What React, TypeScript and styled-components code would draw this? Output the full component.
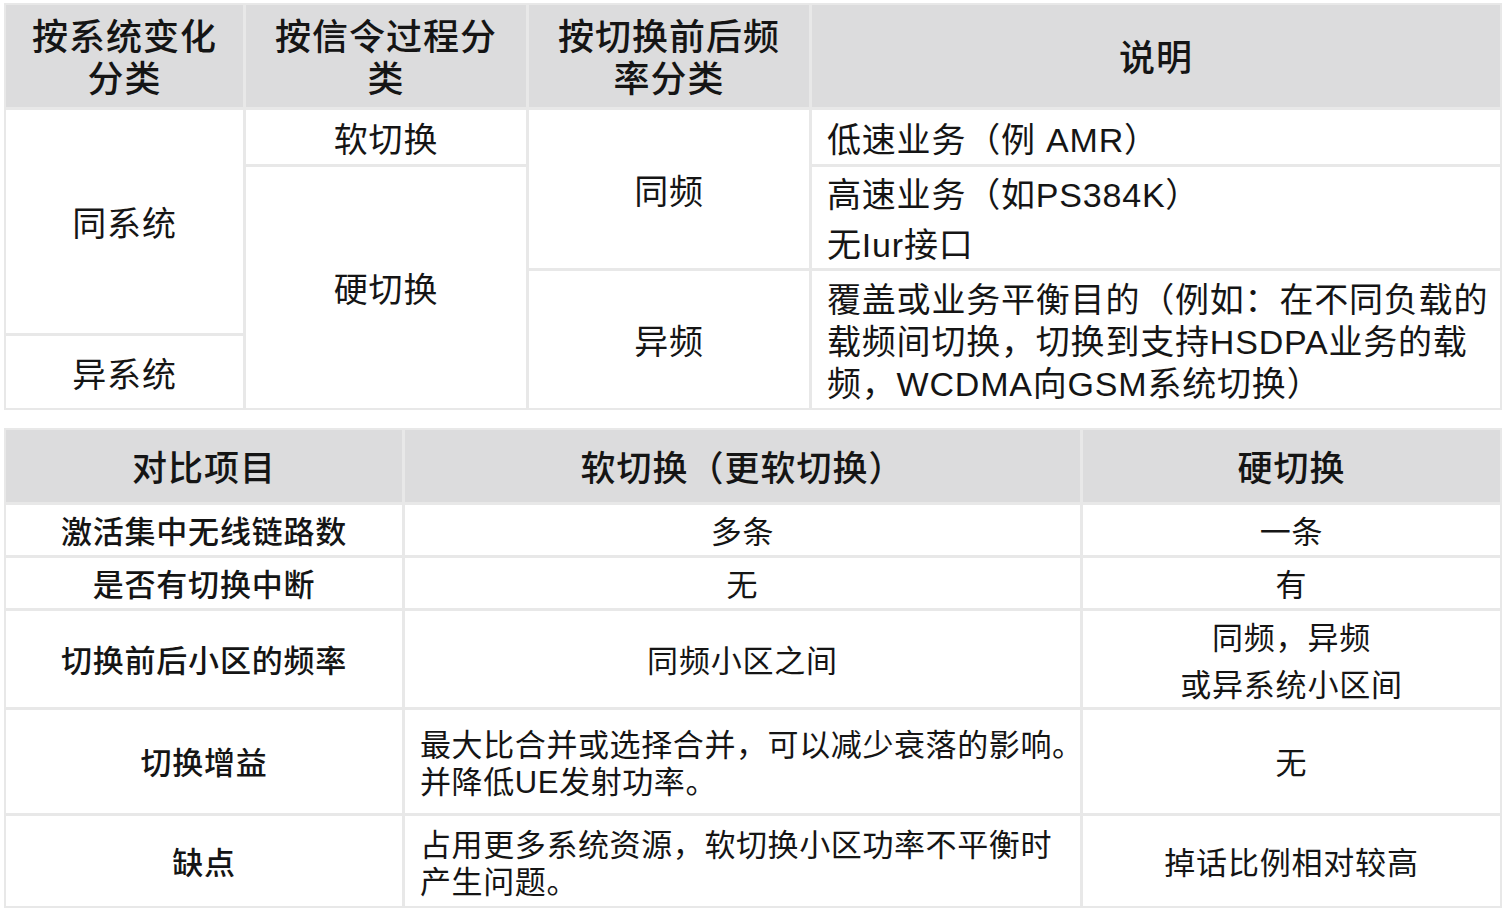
import React from 'react';
import styled, { createGlobalStyle } from 'styled-components';

const GlobalStyle = createGlobalStyle`
  html, body {
    margin: 0;
    padding: 0;
    background: #ffffff;
  }
  body {
    font-family: "Liberation Sans", "Noto Sans CJK SC", sans-serif;
    color: #151515;
  }
`;

const Page = styled.div`
  display: flex;
  flex-direction: column;
  gap: 18px;
  width: 1506px;
  padding: 3px 4px 0 4px;
  box-sizing: border-box;
`;

const Grid = styled.div<{ $cols: string; $rows: string }>`
  display: grid;
  grid-template-columns: ${(p) => p.$cols};
  grid-template-rows: ${(p) => p.$rows};
  gap: 3px;
  padding: 2px;
  background: #e8e8e8;
`;

type CellProps = {
  $col?: string;
  $row?: string;
  $head?: boolean;
  $left?: boolean;
  $size: number;
  $lh?: number;
  $weight?: number;
  $spacing?: number;
};

const Cell = styled.div<CellProps>`
  grid-column: ${(p) => p.$col || 'auto'};
  grid-row: ${(p) => p.$row || 'auto'};
  min-width: 0;
  background: ${(p) => (p.$head ? '#dcdcdd' : '#ffffff')};
  display: flex;
  flex-direction: column;
  justify-content: center;
  align-items: ${(p) => (p.$left ? 'flex-start' : 'center')};
  text-align: ${(p) => (p.$left ? 'left' : 'center')};
  padding: ${(p) => (p.$left ? '5px 0 0 15px' : '5px 8px 0 8px')};
  font-size: ${(p) => p.$size}px;
  line-height: ${(p) => p.$lh || 42}px;
  font-weight: ${(p) => p.$weight || 400};
  letter-spacing: ${(p) => p.$spacing ?? 0.8}px;
  white-space: nowrap;
`;

const Line = styled.span`
  display: block;
`;

const Lines: React.FC<{ text: string[] }> = ({ text }) => (
  <>
    {text.map((t) => (
      <Line key={t}>{t}</Line>
    ))}
  </>
);

const TOP = 34;
const BODY = 31;

const ClassifyTable = () => (
  <Grid $cols="237px 280px 280px 1fr" $rows="102px 54px 101px 62px 72px">
    <Cell $head $size={36} $weight={500} $spacing={1} $col="1" $row="1">
      <Lines text={['按系统变化', '分类']} />
    </Cell>
    <Cell $head $size={36} $weight={500} $spacing={1} $col="2" $row="1">
      <Lines text={['按信令过程分', '类']} />
    </Cell>
    <Cell $head $size={36} $weight={500} $spacing={1} $col="3" $row="1">
      <Lines text={['按切换前后频', '率分类']} />
    </Cell>
    <Cell $head $size={36} $weight={500} $spacing={1} $col="4" $row="1">
      说明
    </Cell>

    <Cell $size={TOP} $col="1" $row="2 / 5">同系统</Cell>
    <Cell $size={TOP} $col="1" $row="5">异系统</Cell>

    <Cell $size={TOP} $col="2" $row="2">软切换</Cell>
    <Cell $size={TOP} $col="2" $row="3 / 6">硬切换</Cell>

    <Cell $size={TOP} $col="3" $row="2 / 4">同频</Cell>
    <Cell $size={TOP} $col="3" $row="4 / 6">异频</Cell>

    <Cell $left $size={TOP} $col="4" $row="2">
      低速业务（例 AMR）
    </Cell>
    <Cell $left $size={TOP} $lh={50} $col="4" $row="3">
      <Lines text={['高速业务（如PS384K）', '无Iur接口']} />
    </Cell>
    <Cell $left $size={TOP} $col="4" $row="4 / 6">
      <Lines
        text={[
          '覆盖或业务平衡目的（例如：在不同负载的',
          '载频间切换，切换到支持HSDPA业务的载',
          '频，WCDMA向GSM系统切换）',
        ]}
      />
    </Cell>
  </Grid>
);

type Row = {
  item: string;
  soft: string[];
  hard: string[];
  softLeft?: boolean;
  softLh?: number;
  hardLh?: number;
};

const rows: Row[] = [
  { item: '激活集中无线链路数', soft: ['多条'], hard: ['一条'] },
  { item: '是否有切换中断', soft: ['无'], hard: ['有'] },
  { item: '切换前后小区的频率', soft: ['同频小区之间'], hard: ['同频，异频', '或异系统小区间'], hardLh: 47 },
  {
    item: '切换增益',
    soft: ['最大比合并或选择合并，可以减少衰落的影响。', '并降低UE发射功率。'],
    hard: ['无'],
    softLeft: true,
    softLh: 37,
  },
  {
    item: '缺点',
    soft: ['占用更多系统资源，软切换小区功率不平衡时', '产生问题。'],
    hard: ['掉话比例相对较高'],
    softLeft: true,
    softLh: 37,
  },
];

const CompareTable = () => (
  <Grid $cols="396px 675px 1fr" $rows="72px 50px 50px 96px 103px 90px">
    <Cell $head $size={35} $weight={500} $spacing={1}>对比项目</Cell>
    <Cell $head $size={35} $weight={500} $spacing={1}>软切换（更软切换）</Cell>
    <Cell $head $size={35} $weight={500} $spacing={1}>硬切换</Cell>
    {rows.map((r) => (
      <React.Fragment key={r.item}>
        <Cell $size={BODY} $weight={500}>{r.item}</Cell>
        <Cell $size={BODY} $left={r.softLeft} $lh={r.softLh} $spacing={r.softLeft ? 0.6 : 0.8}>
          <Lines text={r.soft} />
        </Cell>
        <Cell $size={BODY} $lh={r.hardLh}>
          <Lines text={r.hard} />
        </Cell>
      </React.Fragment>
    ))}
  </Grid>
);

export default function App() {
  return (
    <>
      <GlobalStyle />
      <Page>
        <ClassifyTable />
        <CompareTable />
      </Page>
    </>
  );
}
